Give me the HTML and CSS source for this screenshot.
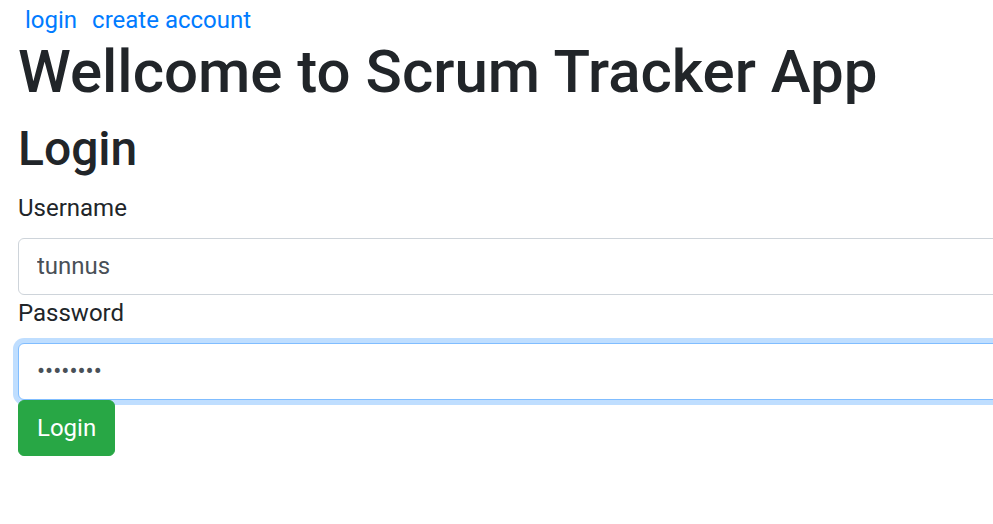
FILE: index.html
```html
<!DOCTYPE html>
<html lang="en">
<head>
<meta charset="utf-8">
<title>Scrum Tracker App</title>
<link rel="stylesheet" href="styles.css">
</head>
<body>
<div class="page">
  <nav class="nav">
    <a href="#" class="nav-link">login</a>
    <a href="#" class="nav-link">create account</a>
  </nav>
  <h1 class="title">Wellcome to Scrum Tracker App</h1>
  <h2 class="subtitle">Login</h2>
  <form class="login-form">
    <label class="form-label" for="username">Username</label>
    <input class="form-control" id="username" type="text" value="tunnus">
    <label class="form-label" for="password">Password</label>
    <input class="form-control is-focused" id="password" type="password" value="salasana">
    <div class="actions">
      <button type="button" class="btn-login">Login</button>
    </div>
  </form>
</div>
</body>
</html>
```
FILE: styles.css
```css
html, body {
  margin: 0;
  padding: 0;
  overflow: hidden;
  background: #fff;
}
body {
  font-family: Roboto, "Liberation Sans", Arial, sans-serif;
  font-size: 24px;
  line-height: 1.5;
  color: #212529;
}
.page {
  padding: 0 0 0 18px;
  width: 1300px;
}
.nav {
  display: flex;
  gap: 15px;
  padding: 2px 0 0 7px;
  height: 34px;
}
.nav-link {
  color: #007bff;
  text-decoration: none;
}
.title {
  margin: 0 0 12px;
  font-size: 60px;
  font-weight: 500;
  line-height: 1.2;
}
.subtitle {
  margin: 0 0 12px;
  font-size: 48px;
  font-weight: 500;
  line-height: 1.2;
}
.login-form {
  display: flex;
  flex-direction: column;
  align-items: flex-start;
}
.form-label {
  display: block;
  margin-bottom: 12px;
}
.form-control {
  box-sizing: border-box;
  width: 100%;
  height: 57px;
  padding: 9px 18px;
  font-family: inherit;
  font-size: 24px;
  line-height: 1.5;
  color: #495057;
  background: #fff;
  border: 1px solid #ced4da;
  border-radius: 6px;
  outline: none;
  margin: 0;
}
.form-control.is-focused {
  border-color: #80bdff;
  box-shadow: 0 0 0 5px rgba(0, 123, 255, 0.25);
}
.actions {
  display: flex;
}
.btn-login {
  font-family: inherit;
  font-size: 24px;
  line-height: 1.5;
  color: #fff;
  background: #28a745;
  border: 1px solid #28a745;
  border-radius: 6px;
  padding: 9px 18px;
  margin: 0;
  cursor: pointer;
}
```
